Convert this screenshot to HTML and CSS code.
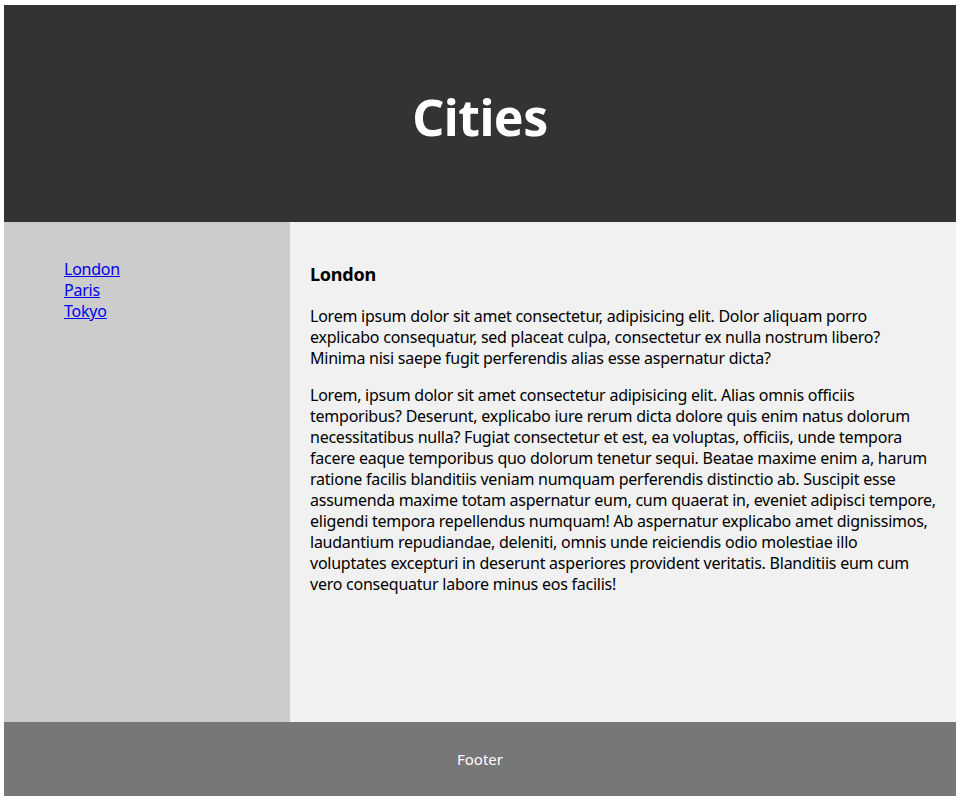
FILE: index.html
```html
<!DOCTYPE html>
<html>
<head>
<meta charset="utf-8">
<title>Cities</title>
<link rel="stylesheet" href="styles.css">
</head>
<body>
<div class="page">
  <header class="site-header">
    <h1>Cities</h1>
  </header>
  <section class="layout">
    <nav class="side-nav">
      <ul>
        <li><a href="#">London</a></li>
        <li><a href="#">Paris</a></li>
        <li><a href="#">Tokyo</a></li>
      </ul>
    </nav>
    <article class="content">
      <h3>London</h3>
      <p>Lorem ipsum dolor sit amet consectetur, adipisicing elit. Dolor aliquam porro explicabo consequatur, sed placeat culpa, consectetur ex nulla nostrum libero? Minima nisi saepe fugit perferendis alias esse aspernatur dicta?</p>
      <p>Lorem, ipsum dolor sit amet consectetur adipisicing elit. Alias omnis officiis temporibus? Deserunt, explicabo iure rerum dicta dolore quis enim natus dolorum necessitatibus nulla? Fugiat consectetur et est, ea voluptas, officiis, unde tempora facere eaque temporibus quo dolorum tenetur sequi. Beatae maxime enim a, harum ratione facilis blanditiis veniam numquam perferendis distinctio ab. Suscipit esse assumenda maxime totam aspernatur eum, cum quaerat in, eveniet adipisci tempore, eligendi tempora repellendus numquam! Ab aspernatur explicabo amet dignissimos, laudantium repudiandae, deleniti, omnis unde reiciendis odio molestiae illo voluptates excepturi in deserunt asperiores provident veritatis. Blanditiis eum cum vero consequatur labore minus eos facilis!</p>
    </article>
  </section>
  <footer class="site-footer">
    <p>Footer</p>
  </footer>
</div>
</body>
</html>
```
FILE: styles.css
```css
html, body {
  margin: 0;
  padding: 0;
  background: #fff;
}
body {
  font-family: "Noto Sans", "Open Sans", sans-serif;
  font-size: 16px;
  line-height: 21px;
  letter-spacing: -0.24px;
  color: #000;
}
.page {
  padding: 5px 4px;
}
.site-header {
  height: 217px;
  background: #333;
  color: #fff;
  display: flex;
  align-items: center;
  justify-content: center;
}
.site-header h1 {
  margin: 0;
  font-size: 50px;
  line-height: 60px;
  font-weight: 700;
  letter-spacing: -0.5px;
  position: relative;
  top: 3px;
}
.layout {
  display: flex;
  height: 500px;
}
.side-nav {
  width: 286px;
  flex: none;
  background: #ccc;
  padding: 37px 0 0 60px;
  box-sizing: border-box;
}
.side-nav ul {
  list-style: none;
  margin: 0;
  padding: 0;
}
.side-nav a {
  color: #00e;
  text-decoration: underline;
}
.content {
  flex: 1;
  background: #f1f1f1;
  padding: 40px 20px 20px 20px;
}
.content h3 {
  margin: 0 0 20px;
  font-size: 18px;
  line-height: 24px;
  font-weight: 700;
}
.content p {
  margin: 0 0 16px;
}
.site-footer {
  height: 74px;
  background: #777;
  color: #fff;
  display: flex;
  align-items: center;
  justify-content: center;
}
.site-footer p {
  margin: 0;
  font-size: 15px;
  letter-spacing: 0;
}
```
